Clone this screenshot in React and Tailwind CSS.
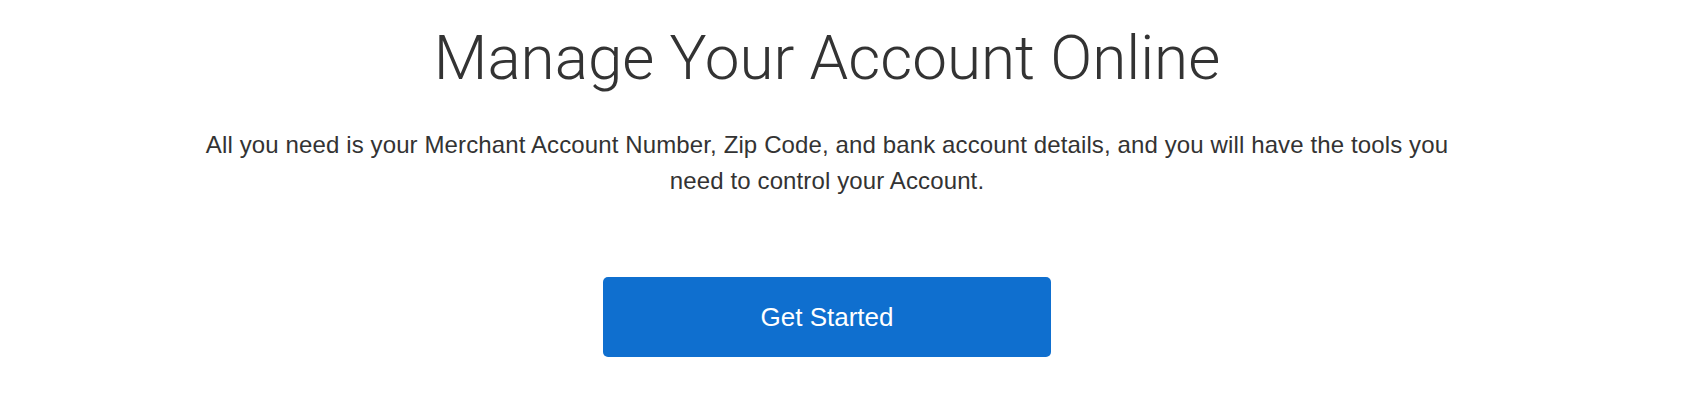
export default function App() {
  return (
    <div className="flex min-h-[420px] w-full flex-col items-center bg-white pr-[40px] pt-[27px] text-[#333]">
      <h1 className="font-['Roboto',sans-serif] text-[62px] font-light leading-[62px] text-[#333]">
        Manage Your Account Online
      </h1>
      <p className="mt-[38px] max-w-[1290px] text-center font-['Liberation_Sans',Arial,sans-serif] text-[24px] leading-[36px] tracking-[0.12px] text-[#333]">
        All you need is your Merchant Account Number, Zip Code, and bank account details, and you will have the tools you need to control your Account.
      </p>
      <button
        type="button"
        className="mt-[78px] h-[80px] w-[448px] rounded-[5px] bg-[#0f6fcf] font-['Liberation_Sans',Arial,sans-serif] text-[26px] text-white"
      >
        Get Started
      </button>
    </div>
  )
}
